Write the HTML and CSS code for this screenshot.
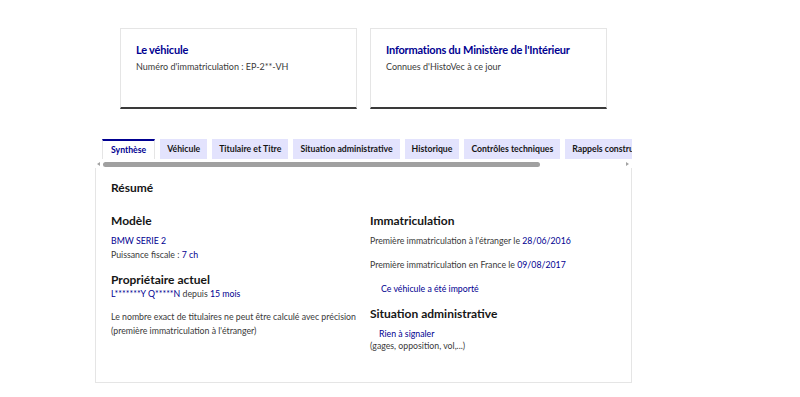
FILE: index.html
```html
<!DOCTYPE html>
<html lang="fr">
<head>
    <meta charset="UTF-8">
    <meta name="viewport" content="width=device-width, initial-scale=1.0">
    <title>HistoVec - Rapport</title>
    <link rel="stylesheet" href="styles.css">
</head>
<body>
    <!-- Cartes du haut -->
    <div class="cards">
        <div class="card">
            <h2>Le véhicule</h2>
            <p>Numéro d'immatriculation : EP-2**-VH</p>
        </div>
        <div class="card">
            <h2>Informations du Ministère de l'Intérieur</h2>
            <p>Connues d'HistoVec à ce jour</p>
        </div>
    </div>

    <!-- Onglets -->
    <div class="tabs">
        <div class="tab_list">
            <span class="tab active">Synthèse</span>
            <span class="tab">Véhicule</span>
            <span class="tab">Titulaire et Titre</span>
            <span class="tab">Situation administrative</span>
            <span class="tab">Historique</span>
            <span class="tab">Contrôles techniques</span>
            <span class="tab">Rappels constructeur</span>
        </div>
        <div class="scrollbar">
            <span class="arrow left"></span>
            <span class="thumb"></span>
            <span class="arrow right"></span>
        </div>
    </div>

    <!-- Panneau synthese -->
    <div class="panel">
        <h3 class="panel_title">Résumé</h3>
        <div class="columns">
            <div class="col">
                <h4>Modèle</h4>
                <p class="link first">BMW SERIE 2</p>
                <p>Puissance fiscale : <span class="blue">7 ch</span></p>
                <h4 class="owner">Propriétaire actuel</h4>
                <p><span class="blue">L*******Y Q*****N</span> depuis <span class="blue">15 mois</span></p>
                <p class="note">Le nombre exact de titulaires ne peut être calculé avec précision<br>(première immatriculation à l'étranger)</p>
            </div>
            <div class="col right_col">
                <h4>Immatriculation</h4>
                <p class="first">Première immatriculation à l'étranger le <span class="blue">28/06/2016</span></p>
                <p class="spaced">Première immatriculation en France le <span class="blue">09/08/2017</span></p>
                <p class="spaced indent blue">Ce véhicule a été importé</p>
                <h4 class="admin">Situation administrative</h4>
                <p class="first indent2 blue tight">Rien à signaler</p>
                <p class="tight">(gages, opposition, vol,...)</p>
            </div>
        </div>
    </div>
</body>
</html>
```

FILE: styles.css
```css
*{
    margin: 0;
    padding: 0;
    box-sizing: border-box;
}
body{
    font-family: "Lato", "Noto Sans", sans-serif;
    color: #3a3a3a;
    background: white;
    width: 800px;
    padding-left: 95px;
}
.cards{
    display: flex;
    gap: 13px;
    margin-left: 25px;
    padding-top: 28px;
}
.card{
    width: 237px;
    height: 81px;
    border: 1px solid #e5e5e5;
    border-bottom: 2px solid #3a3a3a;
    padding: 13px 15px;
}
.card h2{
    color: #000091;
    font-size: 11px;
    letter-spacing: -0.2px;
    font-weight: bold;
    line-height: 16px;
    white-space: nowrap;
}
.card p{
    font-size: 9px;
    margin-top: 3px;
}
.tabs{
    width: 537px;
    margin-top: 30px;
    overflow: hidden;
}
.tab_list{
    display: flex;
    gap: 5px;
    padding-left: 7px;
    white-space: nowrap;
}
.tab{
    flex-shrink: 0;
    background-color: #e3e3fd;
    color: #161616;
    font-size: 8.7px;
    font-weight: bold;
    height: 20px;
    line-height: 20px;
    padding: 0 7px;
}
.tab.active{
    background-color: white;
    color: #000091;
    border: 1px solid #e5e5e5;
    border-top: 2px solid #000091;
    border-bottom: none;
    line-height: 17px;
    padding: 0 8px;
}
.scrollbar{
    display: flex;
    align-items: center;
    height: 8px;
    margin-top: 1px;
}
.arrow{
    width: 0;
    height: 0;
    border-top: 2px solid transparent;
    border-bottom: 2px solid transparent;
}
.arrow.left{
    border-right: 3px solid #a3a3a3;
    margin-left: 2px;
}
.arrow.right{
    border-left: 3px solid #a3a3a3;
    margin-left: auto;
    margin-right: 3px;
}
.thumb{
    width: 437px;
    height: 5px;
    background-color: #a0a0a0;
    border-radius: 3px;
    margin-left: 3px;
}
.panel{
    width: 537px;
    height: 215px;
    border: 1px solid #e5e5e5;
    border-top: none;
    padding: 12px 15px;
}
.panel_title{
    font-size: 12px;
    color: #161616;
    line-height: 16px;
}
.columns{
    display: flex;
    margin-top: 17px;
}
.col{
    width: 259px;
    flex-shrink: 0;
}
.right_col{
    flex: 1;
    width: auto;
}
h4{
    font-size: 12px;
    color: #161616;
    line-height: 16px;
}
.col p{
    font-size: 8.75px;
    line-height: 14px;
}
.first{
    margin-top: 5px;
}
.spaced{
    margin-top: 10px;
}
.blue, .link{
    color: #000091;
}
.indent{
    padding-left: 11px;
}
.indent2{
    padding-left: 9px;
}
.owner{
    margin-top: 11px;
    line-height: 14px;
}
.note{
    margin-top: 9px;
}
.admin{
    margin-top: 10px;
}
.col p.tight{
    line-height: 12px;
}
.col p.first.tight{
    margin-top: 6px;
}
```
